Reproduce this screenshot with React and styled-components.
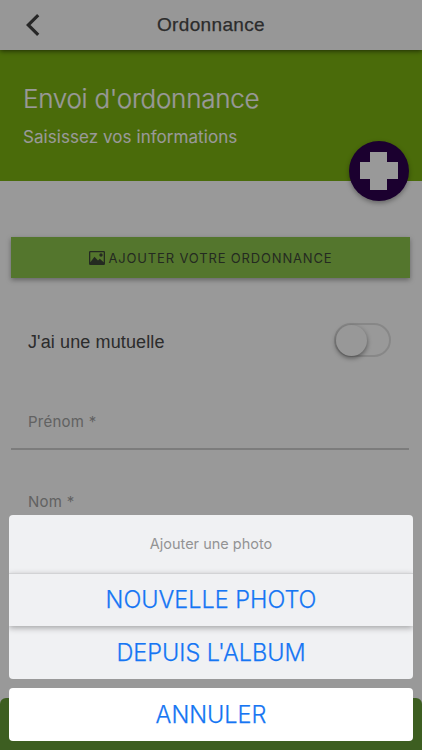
import React from "react";
import styled, { createGlobalStyle } from "styled-components";

const GlobalStyle = createGlobalStyle`
  * {
    box-sizing: border-box;
  }
  body {
    margin: 0;
    background: #fff;
    font-family: Inter, "Liberation Sans", sans-serif;
  }
  button {
    font-family: inherit;
    border: none;
    padding: 0;
  }
`;

const Page = styled.div`
  position: relative;
  display: flex;
  flex-direction: column;
  width: 100%;
  height: 750px;
  overflow: hidden;
  background: #fff;
`;

const Navbar = styled.header`
  position: relative;
  z-index: 1;
  display: grid;
  grid-template-columns: 66px 1fr 66px;
  align-items: center;
  height: 50px;
  flex-shrink: 0;
  background: #fcfcfc;
  box-shadow: 0 1px 5px rgba(0, 0, 0, 0.6);
`;

const BackButton = styled.button`
  display: flex;
  padding-left: 26px;
  background: none;
`;

const NavTitle = styled.h1`
  margin: 0;
  text-align: center;
  font-family: "Liberation Sans", sans-serif;
  font-size: 19px;
  font-weight: 400;
  letter-spacing: 0.35px;
  line-height: 50px;
  color: #4a4a4a;
  -webkit-text-stroke: 0.25px #4a4a4a;
`;

const Hero = styled.section`
  position: relative;
  flex-shrink: 0;
  height: 131px;
  padding: 32px 23px 0;
  background: #7cb311;
  color: #fff;
`;

const HeroTitle = styled.h2`
  margin: 0;
  font-size: 26px;
  font-weight: 300;
  line-height: 34px;
  letter-spacing: -0.28px;
  -webkit-text-stroke: 0.2px #fff;
`;

const HeroText = styled.p`
  margin: 10px 0 0;
  font-size: 17px;
  font-weight: 400;
  line-height: 22px;
  letter-spacing: 0.06px;
`;

const Badge = styled.div`
  position: absolute;
  right: 13px;
  bottom: -20px;
  display: flex;
  align-items: center;
  justify-content: center;
  width: 60px;
  height: 60px;
  border-radius: 50%;
  background: #2d004f;
  box-shadow: 0 2px 5px rgba(0, 0, 0, 0.35);
`;

const Form = styled.main`
  flex: 1;
  padding: 56px 12px 0 11px;
`;

const AddButton = styled.button`
  display: flex;
  align-items: center;
  justify-content: center;
  gap: 4px;
  width: 100%;
  height: 41px;
  background: #8dc54b;
  box-shadow: 0 2px 5px rgba(0, 0, 0, 0.35);
  color: #3d4738;
  font-size: 13px;
  letter-spacing: 0.84px;
`;

const SwitchRow = styled.div`
  display: flex;
  align-items: center;
  justify-content: space-between;
  height: 34px;
  margin-top: 45px;
  padding: 0 19px 0 17px;
`;

const SwitchLabel = styled.span`
  padding-top: 4px;
  font-family: "Liberation Sans", sans-serif;
  font-size: 18px;
  letter-spacing: 0.12px;
  color: #4a4a4a;
`;

const Switch = styled.span`
  display: flex;
  width: 57px;
  height: 34px;
  border: 2px solid #e2e2e2;
  border-radius: 17px;
`;

const Knob = styled.span`
  width: 31px;
  height: 31px;
  border-radius: 50%;
  background: #fdfdfd;
  box-shadow: 0 2px 5px rgba(0, 0, 0, 0.45);
`;

const Field = styled.div`
  height: 54px;
  margin: ${(props) => props.$top}px 1px 0 0;
  padding-left: 17px;
  border-bottom: 2px solid #cfcfcf;
  font-size: 15px;
  line-height: 52px;
  letter-spacing: 0.25px;
  color: #a3a3a3;
`;

const Footer = styled.div`
  flex-shrink: 0;
  height: 52px;
  border-radius: 6px 6px 0 0;
  background: #679d38;
`;

const Backdrop = styled.div`
  position: absolute;
  inset: 0;
  z-index: 2;
  display: flex;
  flex-direction: column;
  justify-content: flex-end;
  gap: 9px;
  padding: 0 9px 9px;
  background: rgba(0, 0, 0, 0.4);
`;

const Sheet = styled.div`
  overflow: hidden;
  border-radius: 4px;
  background: ${(props) => props.$bg};
`;

const SheetTitle = styled.div`
  height: 58px;
  line-height: 57px;
  text-align: center;
  font-size: 14.5px;
  color: #939394;
`;

const SheetButton = styled.button`
  position: relative;
  display: block;
  width: 100%;
  height: 53px;
  line-height: 53px;
  background: transparent;
  color: #1676f3;
  font-size: 23.5px;
  font-weight: 300;
  letter-spacing: -0.02px;
  -webkit-text-stroke: 0.25px #1676f3;
`;

const RaisedButton = styled(SheetButton)`
  z-index: 1;
  border-top: 1px solid #d2d3d5;
  background: #f0f1f3;
  line-height: 52px;
  box-shadow: 0 2px 6px rgba(0, 0, 0, 0.32);
`;

const App = () => {
  return (
    <Page>
      <GlobalStyle />
      <Navbar>
        <BackButton aria-label="Retour">
          <svg width="14" height="22" viewBox="0 0 14 22" fill="none">
            <path d="M12.2 1.2 2.2 11l10 9.8" stroke="#414141" strokeWidth="3.2" />
          </svg>
        </BackButton>
        <NavTitle>Ordonnance</NavTitle>
      </Navbar>
      <Hero>
        <HeroTitle>Envoi d'ordonnance</HeroTitle>
        <HeroText>Saisissez vos informations</HeroText>
        <Badge>
          <svg width="38" height="38" viewBox="0 0 38 38">
            <path d="M10 0h17v10h11v17H27v11H10V27H0V10h10z" fill="#fff" />
          </svg>
        </Badge>
      </Hero>
      <Form>
        <AddButton>
          <svg width="16" height="14" viewBox="0 0 16 14">
            <path
              d="M1.2 0h13.6q1.2 0 1.2 1.2v11.6q0 1.2-1.2 1.2H1.2Q0 14 0 12.8V1.2Q0 0 1.2 0zM1.3 1.2v10L5.5 5.8 9 9.6l1.8-1.8 3.9 3.4v-10z"
              fill="#3d4738"
              fillRule="evenodd"
            />
            <circle cx="12" cy="4" r="1.7" fill="#3d4738" />
          </svg>
          AJOUTER VOTRE ORDONNANCE
        </AddButton>
        <SwitchRow>
          <SwitchLabel>J'ai une mutuelle</SwitchLabel>
          <Switch>
            <Knob />
          </Switch>
        </SwitchRow>
        <Field $top={39}>Prénom *</Field>
        <Field $top={26}>Nom *</Field>
      </Form>
      <Footer />
      <Backdrop>
        <Sheet $bg="#f0f1f3">
          <SheetTitle>Ajouter une photo</SheetTitle>
          <RaisedButton>NOUVELLE PHOTO</RaisedButton>
          <SheetButton>DEPUIS L'ALBUM</SheetButton>
        </Sheet>
        <Sheet $bg="#fff">
          <SheetButton>ANNULER</SheetButton>
        </Sheet>
      </Backdrop>
    </Page>
  );
};

export default App;
